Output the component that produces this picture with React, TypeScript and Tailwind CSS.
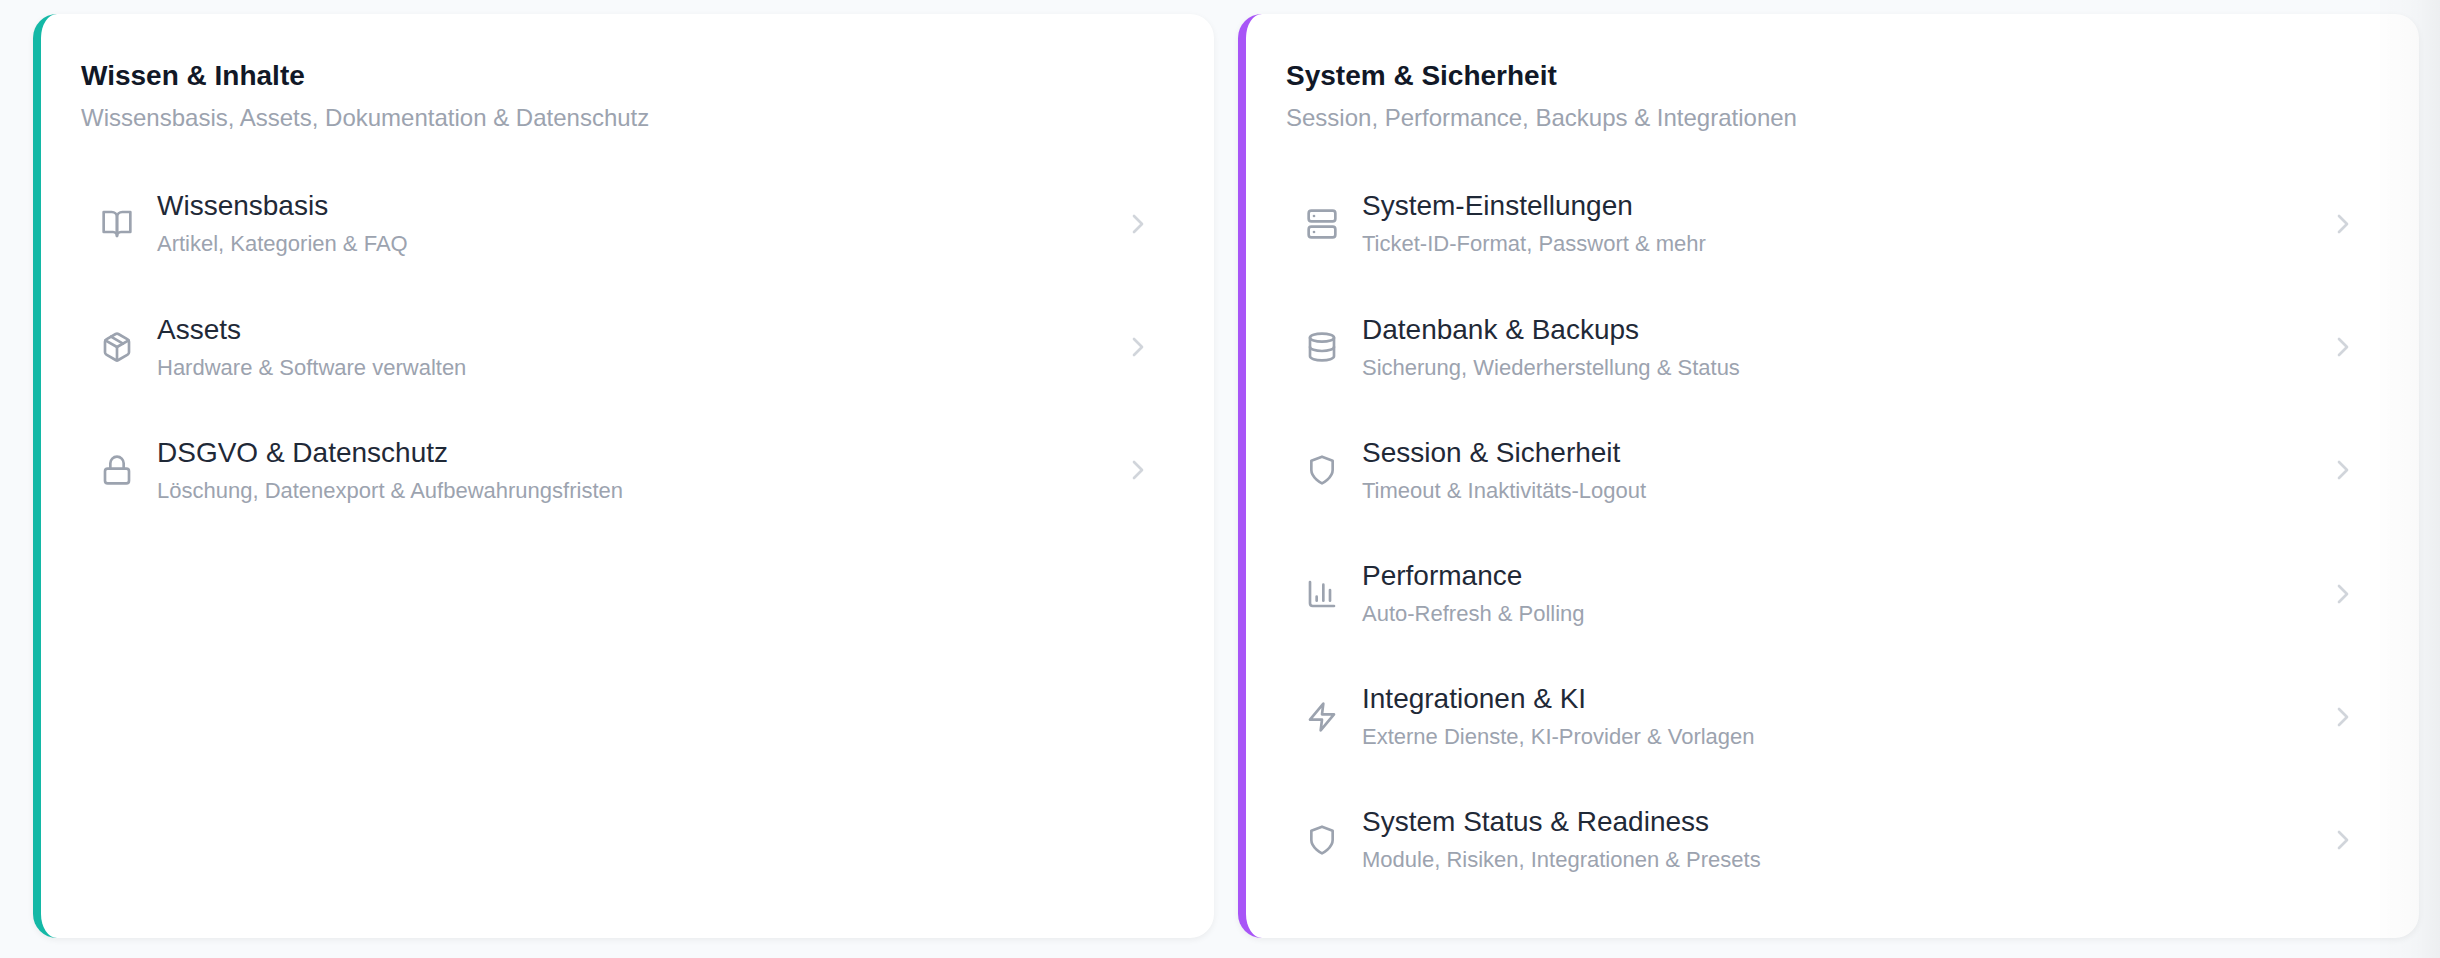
import React from 'react'
import { ChartColumn, ChevronRight, Database, Lock, Server } from 'lucide-react'

type Item = {
  title: string
  description: string
  icon: React.ReactNode
}

type SectionProps = {
  title: string
  description: string
  accent: string
  items: Item[]
}

function Outline({ children }: { children: React.ReactNode }) {
  return (
    <svg
      xmlns="http://www.w3.org/2000/svg"
      viewBox="0 0 24 24"
      fill="none"
      stroke="currentColor"
      strokeWidth={2}
      strokeLinecap="round"
      strokeLinejoin="round"
      className="size-8">
      {children}
    </svg>
  )
}

const bookIcon = (
  <Outline>
    <path d="M2 3h6a4 4 0 0 1 4 4v14a3 3 0 0 0-3-3H2z" />
    <path d="M22 3h-6a4 4 0 0 0-4 4v14a3 3 0 0 1 3-3h7z" />
  </Outline>
)

const packageIcon = (
  <Outline>
    <path d="m7.5 4.27 9 5.15" />
    <path d="M21 8a2 2 0 0 0-1-1.73l-7-4a2 2 0 0 0-2 0l-7 4A2 2 0 0 0 3 8v8a2 2 0 0 0 1 1.73l7 4a2 2 0 0 0 2 0l7-4A2 2 0 0 0 21 16Z" />
    <path d="m3.3 7 8.7 5 8.7-5" />
    <path d="M12 22V12" />
  </Outline>
)

const shieldIcon = (
  <Outline>
    <path d="M12 22s8-4 8-10V5l-8-3-8 3v7c0 6 8 10 8 10z" />
  </Outline>
)

const zapIcon = (
  <Outline>
    <polygon points="13 2 3 14 12 14 11 22 21 10 12 10 13 2" />
  </Outline>
)

const contentItems: Item[] = [
  { title: 'Wissensbasis', description: 'Artikel, Kategorien & FAQ', icon: bookIcon },
  { title: 'Assets', description: 'Hardware & Software verwalten', icon: packageIcon },
  {
    title: 'DSGVO & Datenschutz',
    description: 'Löschung, Datenexport & Aufbewahrungsfristen',
    icon: <Lock className="size-8" />
  }
]

const systemItems: Item[] = [
  {
    title: 'System-Einstellungen',
    description: 'Ticket-ID-Format, Passwort & mehr',
    icon: <Server className="size-8" />
  },
  {
    title: 'Datenbank & Backups',
    description: 'Sicherung, Wiederherstellung & Status',
    icon: <Database className="size-8" />
  },
  { title: 'Session & Sicherheit', description: 'Timeout & Inaktivitäts-Logout', icon: shieldIcon },
  {
    title: 'Performance',
    description: 'Auto-Refresh & Polling',
    icon: <ChartColumn className="size-8" />
  },
  {
    title: 'Integrationen & KI',
    description: 'Externe Dienste, KI-Provider & Vorlagen',
    icon: zapIcon
  },
  {
    title: 'System Status & Readiness',
    description: 'Module, Risiken, Integrationen & Presets',
    icon: shieldIcon
  }
]

function Section({ title, description, accent, items }: SectionProps) {
  return (
    <section
      className={`rounded-3xl border-l-8 bg-white px-10 pt-[41px] shadow-[0_2px_6px_rgba(0,0,0,0.06)] ${accent}`}>
      <h2 className="text-[28px] leading-[41px] font-bold text-[#111827]">{title}</h2>
      <p className="mt-1 text-[24px] leading-[35px] text-[#9ca3af]">{description}</p>
      <ul className="mt-[27.4px]">
        {items.map((item) => (
          <li key={item.title} className="flex h-[123.2px] cursor-pointer items-center gap-6 px-5">
            <span className="shrink-0 text-[#9ca3af]">{item.icon}</span>
            <div className="flex-1 pt-[0.8px]">
              <div className="text-[28px] leading-[37px] text-[#1f2937]">{item.title}</div>
              <div className="mt-0.5 text-[22px] leading-[35px] text-[#9ca3af]">
                {item.description}
              </div>
            </div>
            <ChevronRight className="size-8 shrink-0 text-[#d1d5db]" />
          </li>
        ))}
      </ul>
    </section>
  )
}

export default function App() {
  return (
    <div className="relative h-[958px] overflow-hidden bg-[#f8fafc] pt-3.5 pr-[21px] pl-[33px] font-['Liberation_Sans',Arial,sans-serif]">
      <main className="grid h-[924px] grid-cols-2 gap-6">
        <Section
          title="Wissen & Inhalte"
          description="Wissensbasis, Assets, Dokumentation & Datenschutz"
          accent="border-[#14b8a6]"
          items={contentItems}
        />
        <Section
          title="System & Sicherheit"
          description="Session, Performance, Backups & Integrationen"
          accent="border-[#a855f7]"
          items={systemItems}
        />
      </main>
      {/* soft shade along the right edge of the page */}
      <div className="pointer-events-none absolute inset-y-0 right-0 w-[60px] bg-[linear-gradient(to_right,rgba(0,0,0,0.006),rgba(0,0,0,0.014)_45%,rgba(0,0,0,0.024)_66%,rgba(0,0,0,0.048))]" />
    </div>
  )
}
